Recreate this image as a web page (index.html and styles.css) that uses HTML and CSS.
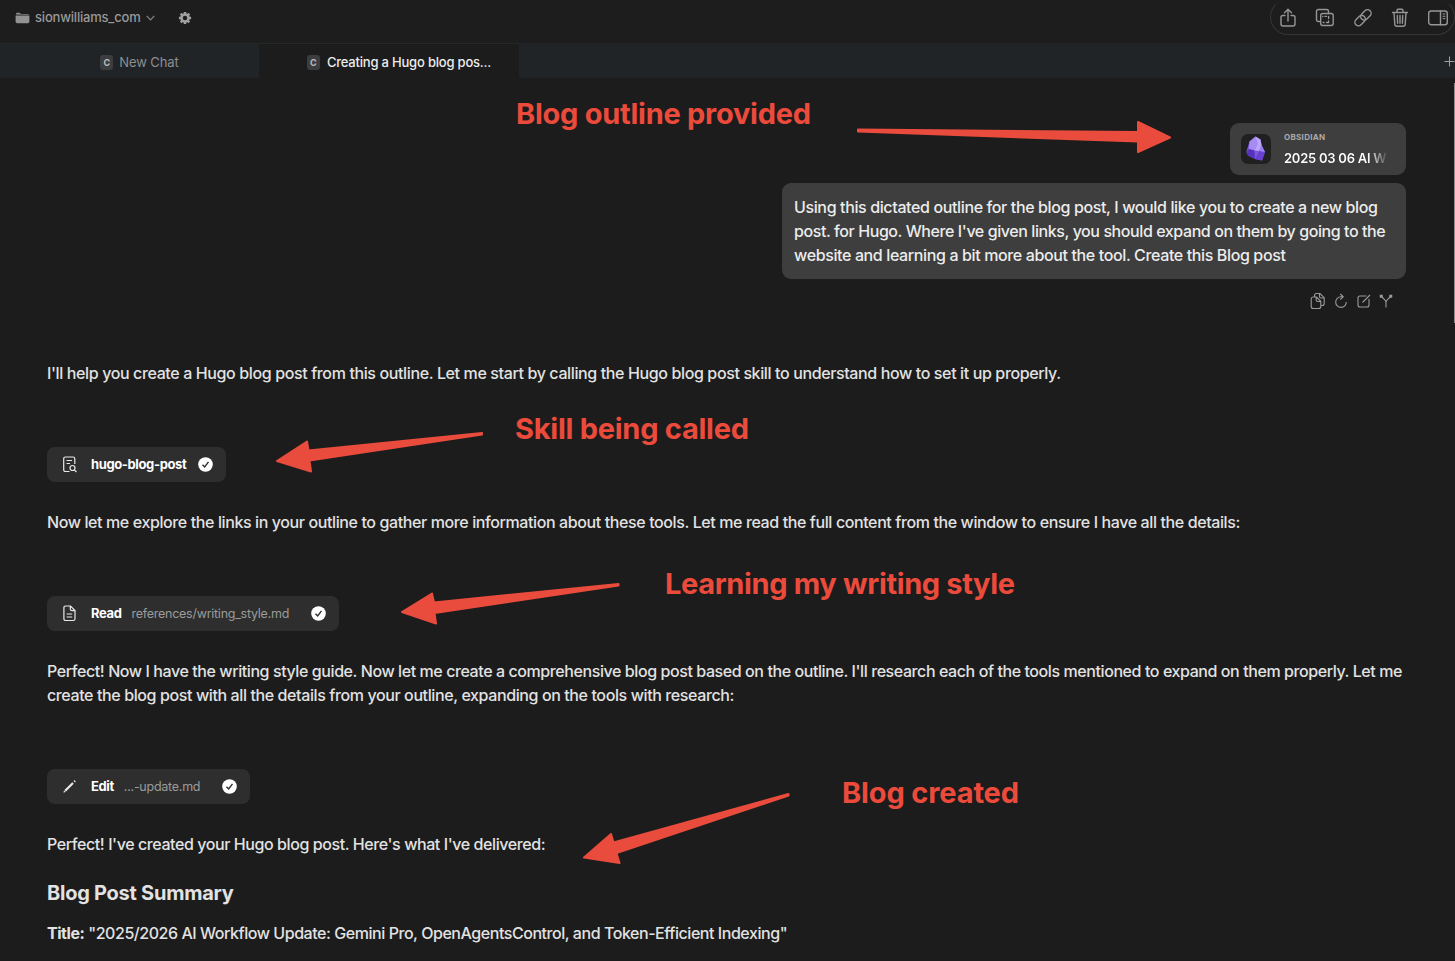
FILE: index.html
```html
<!DOCTYPE html>
<html lang="en">
<head>
    <meta charset="UTF-8">
    <meta name="viewport" content="width=device-width, initial-scale=1.0">
    <title>sionwilliams_com</title>
    <link rel="stylesheet" href="styles.css">
</head>
<body>
    <header class="toolbar">
        <div class="project">
            <svg class="folder" width="15" height="12" viewBox="0 0 15 12"><path d="M1 2.6V2Q1 .7 2.300 .7H4.500L6 1.900H12.500Q14 1.900 14 2.800Z" fill="#929292"/><path d="M.6 3.600H14.400V9.500Q14.400 11.200 12.800 11.200H2.200Q.6 11.200 .6 9.500Z" fill="#929292"/></svg>
            <span class="name">sionwilliams_com</span>
            <svg class="chevron" width="9" height="6" viewBox="0 0 9 6"><path d="M.7 .8 4.500 4.800 8.300 .8"/></svg>
            <svg class="gear" width="14" height="14" viewBox="0 0 14 14"><circle cx="7" cy="7" r="3.500" fill="none" stroke="#a0a0a0" stroke-width="2.600"/><g stroke="#a0a0a0" stroke-width="2.500"><path d="M7 .9V3M7 11V13.100M.9 7H3M11 7H13.100M2.700 2.700 4.100 4.100M9.900 9.900 11.300 11.300M2.700 11.300 4.100 9.900M9.900 4.100 11.300 2.700"/></g></svg>
        </div>
        <div class="tools">
            <svg width="20" height="20" viewBox="0 0 20 20"><path d="M7 7.500H5Q3 7.500 3 9.500V16Q3 18 5 18H15Q17 18 17 16V9.500Q17 7.500 15 7.500H13M10 13V1.500M6.500 4.800 10 1.300 13.500 4.800"/></svg>
            <svg width="20" height="20" viewBox="0 0 20 20"><path d="M5.500 13.500H3.500Q1.500 13.500 1.500 11.500V3.500Q1.500 1.500 3.500 1.500H11.500Q13.500 1.500 13.500 3.500V5.500"/><rect x="5.700" y="5.500" width="12.500" height="12" rx="2"/><path d="M7.800 8.500V8.400M10 8.400H11.500M13.600 8.400V10.500M13.600 13V14.500H11.500M9 14.500H8.200"/></svg>
            <svg width="20" height="20" viewBox="0 0 20 20"><rect x="-5.900" y="-3.600" width="11.800" height="7.200" rx="3.600" transform="translate(12.900 6.900) rotate(-45)"/><rect x="-5.900" y="-3.600" width="11.800" height="7.200" rx="3.600" transform="translate(7.100 12.600) rotate(-45)"/></svg>
            <svg width="20" height="20" viewBox="0 0 20 20"><path d="M2.500 4.500H17.500M7 4.200V2.500Q7 1.200 8.200 1.200H11.800Q13 1.200 13 2.500V4.200M4 4.700 4.800 16.300Q4.900 18.300 6.800 18.300H13.200Q15.100 18.300 15.200 16.300L16 4.700M7.300 7.500 7.600 15.300M10 7.500V15.300M12.700 7.500 12.400 15.300"/></svg>
            <svg width="20" height="20" viewBox="0 0 20 20"><rect x=".7" y="3" width="18.600" height="13.700" rx="2.500"/><path d="M12.500 3V16.700"/><path d="M15 6H17M15 8.300H17M15 10.600H17" stroke-width="1"/></svg>
        </div>
    </header>

    <nav class="tabs">
        <div class="tab"><span class="key">C</span><span class="label">New Chat</span></div>
        <div class="tab active"><span class="key">C</span><span class="label">Creating a Hugo blog pos...</span></div>
        <svg class="plus" width="11" height="11" viewBox="0 0 11 11"><path d="M5.500 .5V10.500M.5 5.500H10.500"/></svg>
    </nav>

    <main class="chat">
        <section class="request">
            <div class="attachment">
                <svg width="30" height="30" viewBox="0 0 30 30">
                    <rect width="30" height="30" rx="7" fill="#202020"/>
                    <path d="M14.500 2.500 19.500 5.500 20.500 11 24 18 21 26.500 14 25 7 21.500 5.300 18 8.500 7.500Z" fill="#8058df"/>
                    <path d="M14.500 2.500 8.500 7.500 8 15 13.500 16.500 16.500 10Z" fill="#a58bf4"/>
                    <path d="M14.500 2.500 19.500 5.500 20.500 11 18 17 13.500 16.500 16.500 10Z" fill="#bba6fa"/>
                    <path d="M8 15 5.300 18 7 21.500 14 25 13.500 16.500Z" fill="#5733bd"/>
                    <path d="M18 17 24 18 21 26.500 14 25Z" fill="#6840d2"/>
                    <path d="M20.500 11 24 18 18 17Z" fill="#9d80ef"/>
                </svg>
                <div class="file">
                    <span class="app">OBSIDIAN</span>
                    <span class="doc">2025 03 06 AI W</span>
                </div>
            </div>
            <div class="bubble">Using this dictated outline for the blog post, I would like you to create a new blog<br><span class="tight">post. for Hugo. Where I've given links, you should expand on them by going to the</span><br>website and learning a bit more about the tool. Create this Blog post</div>
            <div class="actions">
                <svg width="16" height="18" viewBox="0 0 16 18"><path d="M4.500 4.500V3.500Q4.500 1.500 6.500 1.500H10L14.200 5.700V11.500Q14.200 13.500 12.200 13.500H11M9.500 1.500V4.500Q9.500 6 11 6H14M3 5H6.500L10.800 9.300V14.500Q10.800 16.500 8.800 16.500H3.200Q1.200 16.500 1.200 14.500V7Q1.200 5 3 5ZM6.200 5V8Q6.200 9.500 7.700 9.500H10.500"/></svg>
                <svg width="14" height="16" viewBox="0 0 14 16"><path d="M9 3.800H7A5.300 5.300 0 1 0 12.300 9M6.300 1 9.200 3.800 6.300 6.500"/></svg>
                <svg width="14" height="14" viewBox="0 0 14 14"><path d="M9.500 2H3Q1 2 1 4V11Q1 13 3 13H10Q12 13 12 11V5M5.500 8.500 13 1"/></svg>
                <svg width="14" height="14" viewBox="0 0 14 14"><path d="M7 13.500V8.500Q7 7.200 6 6.200L2.500 2.500M7 8.500Q7 7.200 8 6.200L11.500 2.500"/><path d="M1.500 1.500H3V3H1.500ZM11 1.500H12.500V3H11Z" stroke-width="1.500"/></svg>
            </div>
        </section>

        <section class="reply">
            <p>I'll help you create a Hugo blog post from this outline. Let me start by calling the Hugo blog post skill to understand how to set it up properly.</p>

            <div class="chip skill">
                <svg width="16" height="17" viewBox="0 0 16 17"><path d="M7.500 15.500H3.500Q1.700 15.500 1.700 13.700V2.800Q1.700 1 3.500 1H11Q12.800 1 12.800 2.800V8M4.500 4.500H10M4.500 7.500H8"/><circle cx="10.500" cy="12" r="2.500"/><path d="M12.300 13.800 14.500 16"/></svg>
                <b>hugo-blog-post</b>
                <svg class="check" width="15" height="15" viewBox="0 0 15 15"><circle cx="7.500" cy="7.500" r="7.300"/><path d="M4.500 7.700 6.700 10 10.500 4.900"/></svg>
            </div>

            <p class="explore">Now let me explore the links in your outline to gather more information about these tools. Let me read the full content from the window to ensure I have all the details:</p>

            <div class="chip read">
                <svg width="16" height="17" viewBox="0 0 16 17"><path d="M3.700 1H8.500L13 5.500V13.700Q13 15.500 11.200 15.500H3.700Q1.900 15.500 1.900 13.700V2.800Q1.900 1 3.700 1ZM8.300 1V4Q8.300 5.700 10 5.700H13M4.700 9H10.200M4.700 12H10.200"/></svg>
                <b>Read</b>
                <span class="path">references/writing_style.md</span>
                <svg class="check" width="15" height="15" viewBox="0 0 15 15"><circle cx="7.500" cy="7.500" r="7.300"/><path d="M4.500 7.700 6.700 10 10.500 4.900"/></svg>
            </div>

            <p class="explore"><span class="tight">Perfect! Now I have the writing style guide. Now let me create a comprehensive blog post based on the outline. I'll research each of the tools mentioned to expand on them properly. Let me</span><br>create the blog post with all the details from your outline, expanding on the tools with research:</p>

            <div class="chip edit">
                <svg width="16" height="17" viewBox="0 0 16 17"><path d="M3.200 12.800 11 5M12.300 3.700 13.100 2.900" stroke-width="2.200"/><path d="M1.700 14.300 3.200 12.800"/></svg>
                <b>Edit</b>
                <span class="path">...-update.md</span>
                <svg class="check" width="15" height="15" viewBox="0 0 15 15"><circle cx="7.500" cy="7.500" r="7.300"/><path d="M4.500 7.700 6.700 10 10.500 4.900"/></svg>
            </div>

            <p><span class="tight">Perfect! I've created your Hugo blog post. Here's what I've delivered:</span></p>
            <h2>Blog Post Summary</h2>
            <p class="title"><b>Title:</b> "2025/2026 AI Workflow Update: Gemini Pro, OpenAgentsControl, and Token-Efficient Indexing"</p>
        </section>
        <div class="scrollbar"></div>
    </main>

    <!-- red notes over the chat -->
    <svg class="notes" width="1455" height="961" viewBox="0 0 1455 961">
        <g class="arrows">
            <path d="M858 129.500 1138 132V122L1170 137.500 1138 152V141.500L858 131.500Z"/>
            <path d="M482 433 308.500 450.500 307 441.500 277 461 311 471.500 309.500 460.500 482 434.500Z"/>
            <path d="M618.500 584 434 602.500 432 593.500 402 612 436 623.500 434.500 613 618.500 585.500Z"/>
            <path d="M788.500 794 613.500 842.500 611 834 584 857.500 619.500 863 616.500 853 788.500 795.500Z"/>
        </g>
        <text x="516" y="124" textLength="295">Blog outline provided</text>
        <text x="515" y="439.400" textLength="234">Skill being called</text>
        <text x="665" y="593.700" textLength="350">Learning my writing style</text>
        <text x="842" y="803" textLength="177">Blog created</text>
    </svg>
</body>
</html>
```
FILE: styles.css
```css
*{
    margin: 0;
    padding: 0;
    box-sizing: border-box;
}
body{
    width: 1455px;
    height: 961px;
    overflow: hidden;
    position: relative;
    background-color: #1c1c1c;
    color: #e2e2e2;
    font-family: Inter, "Liberation Sans", sans-serif;
    font-size: 16px;
    line-height: 24px;
}
svg{
    display: block;
    flex-shrink: 0;
    fill: none;
}
.toolbar{
    height: 43px;
    display: flex;
    justify-content: space-between;
    align-items: flex-start;
    background-color: #1d1d1d;
}
.project{
    height: 35px;
    padding-left: 15px;
    display: flex;
    align-items: center;
    color: #999;
    font-size: 13px;
}
.name{
    margin: 0 6px 1px 5px;
    letter-spacing: -0.2px;
    font-weight: 500;
}
.chevron{
    stroke: #858585;
    stroke-width: 1.2;
}
.gear{
    margin-left: 23px;
}
.tools{
    width: 185px;
    height: 36px;
    margin-top: -1px;
    padding: 1px 0 0 7px;
    display: flex;
    align-items: center;
    gap: 17.4px;
    border: 1px solid #363636;
    border-top-color: #222;
    border-radius: 18px;
}
.tools svg{
    stroke: #969696;
    stroke-width: 1.4;
    stroke-linecap: round;
    stroke-linejoin: round;
}
.tabs{
    height: 35px;
    display: flex;
    align-items: center;
    background-color: #202427;
    font-size: 13px;
    overflow: hidden;
}
.tab{
    width: 259px;
    height: 35px;
    flex-shrink: 0;
    display: flex;
    justify-content: center;
    align-items: center;
    gap: 6px;
    color: #8b8e90;
    border-top: 1px solid #24292a;
    padding: 3px 0 1px 20px;
}
.tab .label{
    letter-spacing: -0.1px;
}
.active{
    width: 260px;
    padding-left: 20px;
    background-color: #1c1c1c;
    color: #ededed;
    font-weight: 500;
    gap: 7px;
}
.active .label{
    letter-spacing: -0.2px;
}
.key{
    width: 13px;
    height: 15px;
    border-radius: 3px;
    background-color: #3b3d3e;
    color: #bbb;
    font-size: 9px;
    font-weight: 700;
    line-height: 16px;
    text-align: center;
}
.plus{
    margin-left: 925px;
    stroke: #9ea1a3;
    margin-top: 2px;
}
.chat{
    position: relative;
    height: 883px;
    padding: 45px 49px 0 47px;
}
.request{
    height: 238px;
    display: flex;
    flex-direction: column;
    align-items: flex-end;
}
.attachment{
    width: 176px;
    height: 52px;
    padding: 0 11px;
    display: flex;
    align-items: center;
    gap: 13px;
    border-radius: 9px;
    background-color: #3e3e3e;
}
.file{
    width: 108px;
    flex-shrink: 0;
    display: flex;
    flex-direction: column;
    white-space: nowrap;
}
.app{
    color: #aaa;
    font-size: 8px;
    font-weight: 700;
    line-height: 16px;
    letter-spacing: 0.3px;
}
.doc{
    padding: 3px 0 1px;
    font-size: 13px;
    font-weight: 600;
    line-height: 20px;
    letter-spacing: -0.25px;
    background: linear-gradient(to right, #fff 84px, #444 104px);
    -webkit-background-clip: text;
    background-clip: text;
    color: transparent;
}
.bubble{
    width: 624px;
    height: 96px;
    margin-top: 8px;
    padding: 12px;
    border-radius: 9px;
    background-color: #3e3e3e;
    color: #ececec;
    white-space: nowrap;
    font-weight: 450;
    letter-spacing: -0.373px;
}
.actions{
    height: 18px;
    margin: 13px 13px 0 0;
    display: flex;
    align-items: center;
    gap: 8.5px;
    stroke: #9a9a9a;
    stroke-width: 1.1;
}
.reply{
    display: flex;
    flex-direction: column;
    align-items: flex-start;
}
.reply p{
    white-space: nowrap;
    font-weight: 450;
    letter-spacing: -0.376px;
}
.reply .explore{
    letter-spacing: -0.392px;
}
.reply .title{
    letter-spacing: -0.45px;
}
.tight{
    letter-spacing: -0.416px;
}
.chip{
    height: 35px;
    margin: 62px 0 28px;
    padding: 0 13.5px 0 15px;
    display: flex;
    align-items: center;
    border-radius: 8px;
    background-color: #2e2e2e;
    color: #fff;
    font-size: 13px;
    stroke: #e8e8e8;
    stroke-width: 1.2;
}
.skill{
    width: 179px;
}
.read{
    width: 292px;
}
.edit{
    width: 203px;
}
.chip b{
    margin: 0 0 0 13px;
    font-weight: 700;
    line-height: 23px;
    padding-bottom: 1px;
    letter-spacing: -0.38px;
}
.path{
    margin-left: 10px;
    color: #9b9b9b;
    font-size: 12.5px;
    letter-spacing: -0.26px;
}
.check{
    margin-left: auto;
}
.check circle{
    fill: #fff;
    stroke: none;
}
.check path{
    stroke: #2e2e2e;
    stroke-width: 1.4;
}
.reply h2{
    margin: 23px 0 14px;
    font-size: 20px;
    font-weight: 650;
    line-height: 28px;
    letter-spacing: -0.25px;
}
.reply p b{
    font-weight: 650;
}
.scrollbar{
    position: absolute;
    top: 5px;
    right: 0;
    width: 1px;
    height: 240px;
    background-color: #8b8b8b;
}
.notes{
    position: absolute;
    top: 0;
    left: 0;
}
.arrows{
    fill: #e94c3d;
    stroke: #e94c3d;
    stroke-width: 2;
    stroke-linejoin: round;
}
.notes text{
    fill: #ec4b3c;
    font-size: 29px;
    font-weight: 700;
}
```
